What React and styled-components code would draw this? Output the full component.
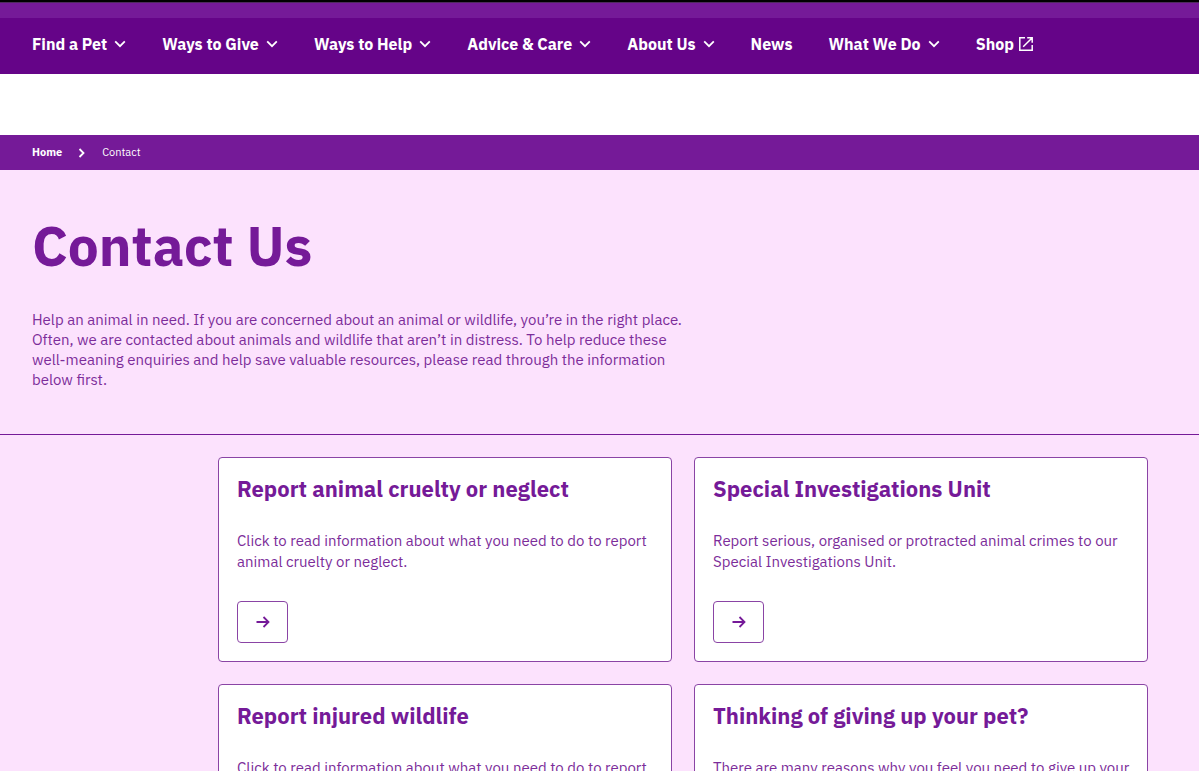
import React from "react";
import styled, { createGlobalStyle, ThemeProvider } from "styled-components";

const theme = {
  purple: "#751a98",
  deep: "#650488",
  pink: "#fce2fd",
  text: "#7c2d9a",
  border: "#8a44a5"
};

const GlobalStyle = createGlobalStyle`
  * {
    box-sizing: border-box;
  }
  body {
    margin: 0;
    background: #fff;
    font-family: "IBM Plex Sans", "Noto Sans", sans-serif;
    font-size: 15px;
  }
  h1, h2, p, ul, ol {
    margin: 0;
    padding: 0;
  }
  a {
    color: inherit;
    text-decoration: none;
  }
`;

const Header = styled.header`
  border-top: 2px solid #000;
  background: ${props => props.theme.deep};
  color: #fff;
`;

const TopStrip = styled.div`
  height: 16px;
  border-top: 1px solid #4e2a5e;
  background: ${props => props.theme.purple};
`;

const Nav = styled.nav`
  display: flex;
  align-items: center;
  gap: 36px;
  height: 56px;
  padding: 0 32px 4px;
`;

const navItem = `
  display: flex;
  align-items: center;
  padding: 0;
  border: 0;
  background: none;
  color: #fff;
  font-family: "IBM Plex Sans", "Noto Sans", sans-serif;
  font-size: 16px;
  font-weight: 700;
  line-height: 24px;
  white-space: nowrap;
`;

const NavButton = styled.button`
  ${navItem}
  gap: 7px;
  cursor: pointer;
`;

const NavLink = styled.a`
  ${navItem}
  gap: 4px;
`;

const Crumbs = styled.nav`
  margin-top: 61px;
  padding: 0 32px;
  background: ${props => props.theme.purple};
  color: #fff;
  font-size: 11px;
  line-height: 35px;
`;

const CrumbList = styled.ol`
  display: flex;
  align-items: center;
  gap: 16px;
  list-style: none;

  li {
    display: flex;
    align-items: center;
    gap: 16px;
  }
`;

const HomeLink = styled.a`
  font-weight: 700;
`;

const Hero = styled.section`
  padding: 44px 32px;
  border-bottom: 1px solid ${props => props.theme.purple};
  background: ${props => props.theme.pink};
`;

const Title = styled.h1`
  margin-bottom: 32px;
  color: ${props => props.theme.purple};
  font-size: 55px;
  font-weight: 700;
  line-height: 64px;
`;

const Para = styled.p`
  color: ${props => props.theme.text};
  line-height: 21px;
`;

const Intro = styled(Para)`
  max-width: 660px;
  line-height: 20px;
`;

const Cards = styled.main`
  display: grid;
  grid-template-columns: 1fr 1fr;
  gap: 22px;
  padding: 22px 51px 44px 218px;
  background: ${props => props.theme.pink};
`;

const CardBox = styled.article`
  padding: 18px 16px 18px 18px;
  border: 1px solid ${props => props.theme.border};
  border-radius: 4px;
  background: #fff;
`;

const CardTitle = styled.h2`
  margin-bottom: 28px;
  color: ${props => props.theme.purple};
  font-size: 22px;
  font-weight: 700;
  line-height: 26px;
`;

const CardLink = styled.a`
  display: flex;
  align-items: center;
  justify-content: center;
  width: 51px;
  height: 42px;
  margin-top: 29px;
  border: 1px solid ${props => props.theme.border};
  border-radius: 4px;
  color: ${props => props.theme.purple};
`;

const ChevronDown = () => (
  <svg width="12" height="12" viewBox="0 0 12 12" fill="none" aria-hidden="true">
    <path d="M1.200 3.400 6 8.200l4.800-4.800" stroke="currentColor" strokeWidth="1.8" />
  </svg>
);

const ChevronRight = () => (
  <svg width="8" height="10" viewBox="0 0 8 10" fill="none" aria-hidden="true">
    <path d="M1.500 1l4 4-4 4" stroke="currentColor" strokeWidth="1.8" />
  </svg>
);

const External = () => (
  <svg width="16" height="16" viewBox="0 0 16 16" fill="none" aria-hidden="true">
    <path
      d="M7 1.800H1.800v12.400h12.400V9M9.200 1.800h5v5M14 2 5.200 10.800"
      stroke="currentColor"
      strokeWidth="1.500"
    />
  </svg>
);

const Arrow = () => (
  <svg width="14" height="12" viewBox="0 0 14 12" fill="none" aria-hidden="true">
    <path d="M.5 6h12M7.500 1l5 5-5 5" stroke="currentColor" strokeWidth="1.800" />
  </svg>
);

const menus = [
  { label: "Find a Pet" },
  { label: "Ways to Give" },
  { label: "Ways to Help" },
  { label: "Advice & Care" },
  { label: "About Us" },
  { label: "News", link: true },
  { label: "What We Do" },
  { label: "Shop", link: true, external: true }
];

const cards = [
  {
    title: "Report animal cruelty or neglect",
    text:
      "Click to read information about what you need to do to report animal cruelty or neglect."
  },
  {
    title: "Special Investigations Unit",
    text:
      "Report serious, organised or protracted animal crimes to our Special Investigations Unit."
  },
  {
    title: "Report injured wildlife",
    text:
      "Click to read information about what you need to do to report injured wildlife."
  },
  {
    title: "Thinking of giving up your pet?",
    text:
      "There are many reasons why you feel you need to give up your pet."
  }
];

const Card = ({ title, text }) => (
  <CardBox>
    <CardTitle>{title}</CardTitle>
    <Para>{text}</Para>
    <CardLink href="#" aria-label={title}>
      <Arrow />
    </CardLink>
  </CardBox>
);

const App = () => (
  <ThemeProvider theme={theme}>
    <GlobalStyle />
    <Header>
      <TopStrip />
      <Nav aria-label="Main">
        {menus.map(({ label, link, external }) =>
          link ? (
            <NavLink key={label} href="#">
              {label}
              {external && <External />}
            </NavLink>
          ) : (
            <NavButton key={label} type="button">
              {label}
              <ChevronDown />
            </NavButton>
          )
        )}
      </Nav>
    </Header>
    <Crumbs aria-label="Breadcrumb">
      <CrumbList>
        <li>
          <HomeLink href="#">Home</HomeLink>
          <ChevronRight />
        </li>
        <li>Contact</li>
      </CrumbList>
    </Crumbs>
    <Hero>
      <Title>Contact Us</Title>
      <Intro>
        Help an animal in need. If you are concerned about an animal or
        wildlife, you’re in the right place. Often, we are contacted about
        animals and wildlife that aren’t in distress. To help reduce these
        well-meaning enquiries and help save valuable resources, please read
        through the information below first.
      </Intro>
    </Hero>
    <Cards>
      {cards.map(card => (
        <Card key={card.title} {...card} />
      ))}
    </Cards>
  </ThemeProvider>
);

export default App;
